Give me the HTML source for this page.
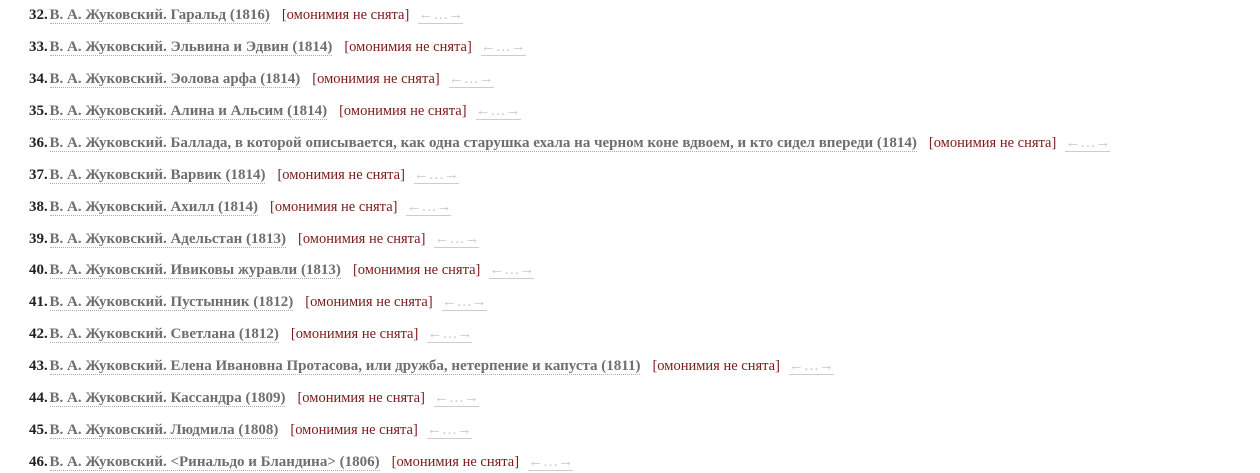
<!DOCTYPE html>
<html><head><meta charset="utf-8"><style>
body{margin:0;background:#fff;width:1260px;height:473px;overflow:hidden;font-family:"Liberation Serif",serif;font-size:15px;}
.r{position:absolute;left:29px;white-space:nowrap;line-height:17px;}
.n{font-weight:bold;color:#222;}
.t{font-weight:bold;color:#6e6e6e;border-bottom:1px dotted #aaa;margin-left:-2px;}
.o{color:#7a1a1a;margin-left:12px;font-size:14.5px;}
.a{color:#c8c8c8;margin-left:9px;border-bottom:1px solid #ccc;font-size:15px;}
</style></head><body>
<div id="w"></div>
<script>
var d=[["32","Гаральд (1816)"],["33","Эльвина и Эдвин (1814)"],["34","Эолова арфа (1814)"],["35","Алина и Альсим (1814)"],["36","Баллада, в которой описывается, как одна старушка ехала на черном коне вдвоем, и кто сидел впереди (1814)"],["37","Варвик (1814)"],["38","Ахилл (1814)"],["39","Адельстан (1813)"],["40","Ивиковы журавли (1813)"],["41","Пустынник (1812)"],["42","Светлана (1812)"],["43","Елена Ивановна Протасова, или дружба, нетерпение и капуста (1811)"],["44","Кассандра (1809)"],["45","Людмила (1808)"],["46","&lt;Ринальдо и Бландина&gt; (1806)"]];
var h="";for(var i=0;i<d.length;i++){h+='<div class="r" style="top:'+(7+i*31.93)+'px"><span class="n">'+d[i][0]+'.</span> <span class="t">В. А. Жуковский. '+d[i][1]+'</span><span class="o">[омонимия не снята]</span><span class="a">←…→</span></div>';}
document.getElementById("w").innerHTML=h;
</script>
</body></html>
